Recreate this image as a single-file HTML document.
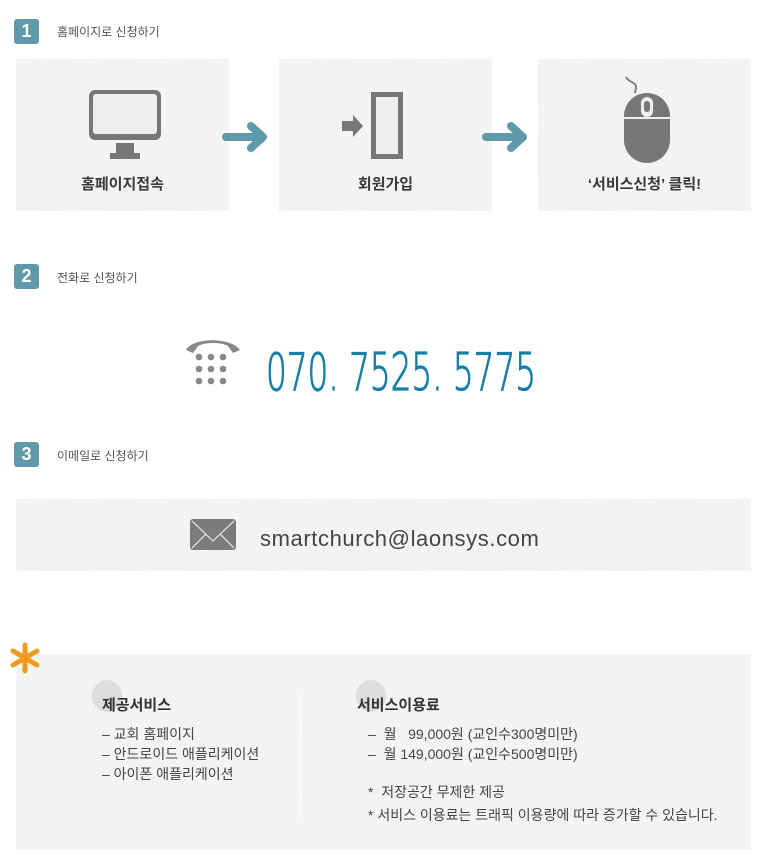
<!DOCTYPE html>
<html><head><meta charset="utf-8"><style>
*{margin:0;padding:0;box-sizing:border-box}
body{width:764px;height:859px;background:#fff;position:relative;font-family:"Liberation Sans","Noto Sans CJK KR",sans-serif;color:#444;overflow:hidden}
.abs{position:absolute}
.badge{position:absolute;left:14px;width:25px;height:25px;background:#5f9aab;border-radius:3px;color:#fff;font-size:18px;text-align:center;line-height:25px;font-weight:bold}
.h{position:absolute;left:57px;font-size:12px;color:#555}
.pat{position:absolute;background-color:#f1f1f1;background-image:repeating-linear-gradient(135deg,rgba(255,255,255,.55) 0 1px,transparent 1px 3px)}
.lbl{position:absolute;width:100%;text-align:center;font-size:15px;font-weight:bold;color:#3a3a3a;top:114px}
.li{position:absolute;font-size:14px;color:#444;white-space:nowrap}
</style></head><body>
<div class="badge" style="top:19px">1</div><div class="h" style="top:23px">홈페이지로 신청하기</div>
<div class="badge" style="top:264px">2</div><div class="h" style="top:269px">전화로 신청하기</div>
<div class="badge" style="top:442px">3</div><div class="h" style="top:447px">이메일로 신청하기</div>

<div class="pat" style="left:16px;top:59px;width:213px;height:152px">
<svg class="abs" style="left:72px;top:30px" width="75" height="75"><rect x="1" y="1" width="72" height="50" rx="6" fill="#777"/><rect x="5" y="5" width="64" height="40" rx="3" fill="#eee"/><rect x="28" y="54" width="18" height="10" fill="#777"/><rect x="22" y="64" width="30" height="6" fill="#777"/></svg>
<div class="lbl">홈페이지접속</div></div>
<svg class="abs" style="left:221px;top:117px" width="50" height="40"><path d="M5 20H40M30 9L42 20L30 31" stroke="#5f9aab" stroke-width="8" fill="none" stroke-linecap="round" stroke-linejoin="round"/></svg>
<div class="pat" style="left:279px;top:59px;width:213px;height:152px">
<svg class="abs" style="left:60px;top:33px" width="75" height="70"><path d="M3 29h11v-6l10 11-10 11v-6H3z" fill="#777"/><rect x="32" y="0" width="32" height="67" fill="#777"/><rect x="37" y="5" width="22" height="57" fill="#eee"/></svg>
<div class="lbl">회원가입</div></div>
<svg class="abs" style="left:481px;top:117px" width="50" height="40"><path d="M5 20H40M30 9L42 20L30 31" stroke="#5f9aab" stroke-width="8" fill="none" stroke-linecap="round" stroke-linejoin="round"/></svg>
<div class="pat" style="left:538px;top:59px;width:213px;height:152px">
<svg class="abs" style="left:82px;top:16px" width="52" height="90"><path d="M6 2c2 5 10 5 10 10c0 3 -1 4 -1 6" stroke="#777" stroke-width="1.8" fill="none"/><rect x="4" y="18" width="46" height="70" rx="23" fill="#777"/><path d="M4 43H50" stroke="#eee" stroke-width="2"/><rect x="21" y="22" width="12" height="20" rx="6" fill="#eee"/><rect x="24" y="26" width="6" height="11" rx="3" fill="#777"/></svg>
<div class="lbl">‘서비스신청’ 클릭!</div></div>

<svg class="abs" style="left:183px;top:335px" width="60" height="60"><path d="M3 15C10 2 48 2 57 15L50 18L45 11C38 7 22 7 15 11L10 18Z" fill="#888"/><g fill="#888"><circle cx="16" cy="22" r="3.3"/><circle cx="28" cy="22" r="3.3"/><circle cx="40" cy="22" r="3.3"/><circle cx="16" cy="34" r="3.3"/><circle cx="28" cy="34" r="3.3"/><circle cx="40" cy="34" r="3.3"/><circle cx="16" cy="46" r="3.3"/><circle cx="28" cy="46" r="3.3"/><circle cx="40" cy="46" r="3.3"/></g></svg>
<svg class="abs" style="left:264px;top:345px" width="280" height="50"><text x="2" y="45" font-family="DejaVu Sans, sans-serif" font-size="52" fill="#1a7fa5" stroke="#1a7fa5" stroke-width="1.2" textLength="270" lengthAdjust="spacingAndGlyphs" font-weight="200">070. 7525. 5775</text></svg>

<div class="pat" style="left:16px;top:499px;width:735px;height:72px">
<svg class="abs" style="left:174px;top:20px" width="46" height="32"><rect width="46" height="31" rx="3" fill="#7c7c7c"/><path d="M2 2L23 22L44 2M2 29L16 15M44 29L30 15" stroke="#ddd" stroke-width="1.3" fill="none"/></svg>
<div class="abs" style="left:244px;top:27px;font-size:22px;color:#444;letter-spacing:.6px">smartchurch@laonsys.com</div>
</div>

<div class="pat" style="left:16px;top:654px;width:735px;height:196px">
<div class="abs" style="left:76px;top:26px;width:30px;height:32px;border-radius:50%;background:#ddd"></div>
<div class="abs" style="left:86px;top:40px;font-size:15px;font-weight:bold;color:#333">제공서비스</div>
<div class="li" style="left:86px;top:70px">– 교회 홈페이지</div>
<div class="li" style="left:86px;top:90px">– 안드로이드 애플리케이션</div>
<div class="li" style="left:86px;top:110px">– 아이폰 애플리케이션</div>
<div class="abs" style="left:284px;top:40px;width:1px;height:124px;background:#fff"></div>
<div class="abs" style="left:340px;top:26px;width:30px;height:32px;border-radius:50%;background:#ddd"></div>
<div class="abs" style="left:341px;top:40px;font-size:15px;font-weight:bold;color:#333">서비스이용료</div>
<div class="li" style="left:352px;top:70px">–&nbsp; 월&nbsp;&nbsp; 99,000원 (교인수300명미만)</div>
<div class="li" style="left:352px;top:90px">–&nbsp; 월 149,000원 (교인수500명미만)</div>
<div class="li" style="left:352px;top:128px">*&nbsp; 저장공간 무제한 제공</div>
<div class="li" style="left:352px;top:151px">* 서비스 이용료는 트래픽 이용량에 따라 증가할 수 있습니다.</div>
</div>
<svg class="abs" style="left:9px;top:642px" width="32" height="32"><g stroke="#f39a1e" stroke-width="5" stroke-linecap="round"><path d="M16 3V29M4 9L28 23M28 9L4 23"/></g></svg>
</body></html>
